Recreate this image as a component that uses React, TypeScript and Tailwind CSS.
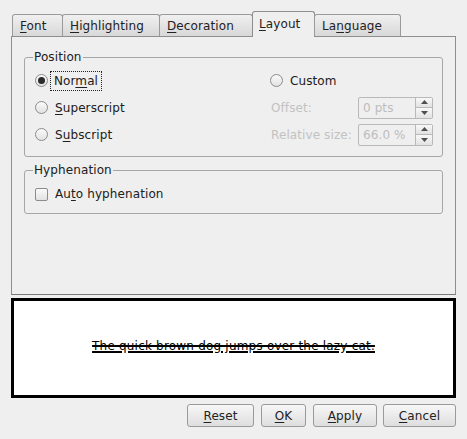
import type { ReactNode } from 'react';

// underlined mnemonic letter
const M = ({ children }: { children: ReactNode }) => <span className="underline underline-offset-2">{children}</span>;

const Tab = ({ children, className }: { children: ReactNode; className: string }) => (
  <div
    className={
      '-ml-px flex items-center h-[22px] pl-[7px] border border-b-0 border-[#9a9a9a] rounded-t-[3px] bg-linear-to-b from-[#f0f0f0] to-[#d8d8d8] text-[#222] ' +
      className
    }
  >
    {children}
  </div>
);

const Radio = ({ checked }: { checked?: boolean }) => (
  <div className="w-[13px] h-[13px] shrink-0 rounded-full border border-[#8c8c8c] bg-linear-to-b from-[#fafafa] to-[#e2e2e2] flex items-center justify-center">
    {checked && <div className="w-[7px] h-[7px] rounded-full bg-[#2b2b2b]" />}
  </div>
);

const Arrow = ({ up }: { up?: boolean }) => (
  <svg width="7" height="4" viewBox="0 0 7 4">
    <polygon points={up ? '0,4 3.5,0 7,4' : '0,0 3.5,4 7,0'} fill="#4e4e4e" />
  </svg>
);

const SpinBox = ({ value }: { value: string }) => (
  <div className="self-center flex w-[75px] h-[22px] rounded-[2px] border border-[#b9b9b9] bg-[#efefef]">
    <div className="flex-1 flex items-center pl-[4px] text-[#bdbdbd]">{value}</div>
    <div className="w-[17px] flex flex-col border-l border-[#b9b9b9]">
      <div className="flex-1 flex items-center justify-center bg-linear-to-b from-[#f8f8f8] to-[#e2e2e2] border-b border-[#b9b9b9]">
        <Arrow up />
      </div>
      <div className="flex-1 flex items-center justify-center bg-linear-to-b from-[#f8f8f8] to-[#e2e2e2]">
        <Arrow />
      </div>
    </div>
  </div>
);

const Button = ({ children, className }: { children: ReactNode; className: string }) => (
  <button
    className={
      'h-[23px] flex items-center justify-center rounded-[3px] border border-[#9a9a9a] bg-linear-to-b from-[#f7f7f7] to-[#dedede] text-[#222] ' +
      className
    }
  >
    {children}
  </button>
);

export default function App() {
  return (
    <div className="w-[467px] h-[439px] bg-[#efefef] pl-[11px] pt-[11px] font-['DejaVu_Sans',sans-serif] text-[12px] leading-[14px] tracking-[0.1px] text-[#202020]">
      {/* tabs */}
      <div className="relative z-10 flex items-end h-[25px] pl-[2px]">
        <Tab className="w-[51px]">
          <span><M>F</M>ont</span>
        </Tab>
        <Tab className="w-[98px]">
          <span><M>H</M>ighlighting</span>
        </Tab>
        <Tab className="w-[94px]">
          <span><M>D</M>ecoration</span>
        </Tab>
        <div className="-ml-px -mb-px flex items-center h-[26px] w-[63px] pl-[6px] pb-[2px] border border-b-0 border-[#8e8e8e] rounded-t-[3px] bg-[#efefef] text-[#222]">
          <span><M>L</M>ayout</span>
        </div>
        <Tab className="w-[87px]">
          <span>La<M>n</M>guage</span>
        </Tab>
      </div>

      {/* page */}
      <div className="w-[445px] h-[259px] border border-[#8e8e8e] border-b-[#7a7a7a] bg-[#efefef] pl-[12px] pt-[13px]">
        <fieldset className="w-[419px] rounded-[3px] border border-[#a6a6a6] pb-[8px]">
          <legend className="ml-[8px] px-[1px] leading-[14px]">Position</legend>
          <div className="grid grid-cols-[235px_88px_75px] auto-rows-[27px] pl-[10px] pt-[3px]">
            <div className="flex items-center">
              <Radio checked />
              <span className="ml-[2px] px-[3px] py-[2px] border border-dotted border-[#222]">
                Nor<M>m</M>al
              </span>
            </div>
            <div className="col-span-2 flex items-center">
              <Radio />
              <span className="ml-[7px]">Custom</span>
            </div>

            <div className="flex items-center">
              <Radio />
              <span className="ml-[7px]"><M>S</M>uperscript</span>
            </div>
            <div className="flex items-center pl-[1px] text-[#c2c2c2]">Offset:</div>
            <SpinBox value="0 pts" />

            <div className="flex items-center">
              <Radio />
              <span className="ml-[7px]">S<M>u</M>bscript</span>
            </div>
            <div className="flex items-center pl-[1px] text-[#c2c2c2]">Relative size:</div>
            <SpinBox value="66.0 %" />
          </div>
        </fieldset>

        <fieldset className="mt-[6px] w-[419px] rounded-[3px] border border-[#a6a6a6] pb-[6px]">
          <legend className="ml-[8px] px-[1px] leading-[14px]">Hyphenation</legend>
          <div className="flex items-center h-[26px] pl-[10px] pt-[4px] box-content">
            <div className="w-[13px] h-[13px] rounded-[2px] border border-[#8c8c8c] bg-linear-to-b from-[#fafafa] to-[#e2e2e2]" />
            <span className="ml-[7px]">Au<M>t</M>o hyphenation</span>
          </div>
        </fieldset>
      </div>

      {/* preview */}
      <div className="mt-[3px] w-[445px] h-[100px] border-[3px] border-black bg-white flex items-center justify-center">
        <span className="-mt-[4px] text-black tracking-[0.2px] [text-decoration-line:underline_line-through] decoration-2">
          The quick brown dog jumps over the lazy cat.
        </span>
      </div>

      {/* buttons */}
      <div className="mt-[6px] w-[445px] flex justify-end">
        <Button className="w-[67px]">
          <span><M>R</M>eset</span>
        </Button>
        <Button className="ml-[7px] w-[45px]">
          <span><M>O</M>K</span>
        </Button>
        <Button className="ml-[7px] w-[64px]">
          <span><M>A</M>pply</span>
        </Button>
        <Button className="ml-[6px] w-[73px]">
          <span><M>C</M>ancel</span>
        </Button>
      </div>
    </div>
  );
}
